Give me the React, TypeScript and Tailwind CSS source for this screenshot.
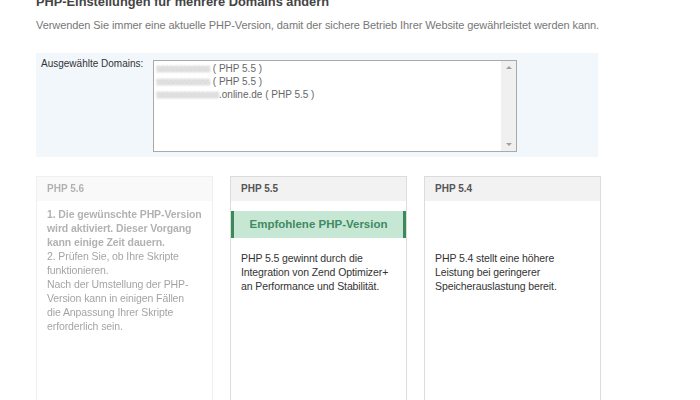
import React from 'react';

const Blur = ({ text }: { text: string }) => (
  <span className="text-[#aaa] blur-[0.8px] tracking-[-0.5px]">{text}</span>
);

function Card({
  title,
  faded,
  banner,
  spacer,
  children,
}: {
  title: string;
  faded?: boolean;
  banner?: boolean;
  spacer?: boolean;
  children: React.ReactNode;
}) {
  return (
    <div className={`w-[177px] h-[240px] border border-[#dcdcdc] bg-white ${faded ? 'opacity-45' : ''}`}>
      <div className="h-[24px] bg-[#f2f2f2] px-[10px] text-[10px] font-bold leading-[24px] text-[#555]">{title}</div>
      {banner && (
        <div className="mt-[10px] h-[27px] border-l-[3px] border-r-[3px] border-[#3b8a5c] bg-[#c6e7d4] text-center text-[11.5px] font-bold leading-[27px] text-[#418a62]">
          Empfohlene PHP-Version
        </div>
      )}
      {spacer && <div className="mt-[10px] h-[27px]" />}
      <div
        className={`pl-[10px] pr-[7px] text-[10.5px] leading-[14px] tracking-[-0.1px] text-[#333] ${faded ? 'pt-[6px]' : 'pt-[13px]'}`}
      >
        {children}
      </div>
    </div>
  );
}

export default function App() {
  return (
    <div className="w-[700px] h-[400px] overflow-hidden bg-white pl-[36px] font-['Liberation_Sans',Arial,sans-serif]">
      <h1 className="-mt-[6px] text-[12.8px] font-bold leading-[16px] text-[#444]">
        PHP-Einstellungen für mehrere Domains ändern
      </h1>
      <p className="mt-[8px] text-[11px] leading-[14px] tracking-[-0.08px] text-[#777]">
        Verwenden Sie immer eine aktuelle PHP-Version, damit der sichere Betrieb Ihrer Website gewährleistet werden kann.
      </p>

      <div className="mt-[21px] flex h-[104px] w-[562px] bg-[#f2f7fc] pl-[5px] pt-[4px]">
        <div className="w-[112px] text-[10px] leading-[13px] text-[#333]">Ausgewählte Domains:</div>
        <div className="mt-[3px] flex h-[92px] w-[364px] border border-[#a9a9a9] bg-white">
          <div className="flex-1 pl-[2px] pt-[1px] text-[10px] leading-[13px] text-[#666]">
            <div>
              <Blur text="ssssssssssss" /> ( PHP 5.5 )
            </div>
            <div>
              <Blur text="ssssssssssss" /> ( PHP 5.5 )
            </div>
            <div>
              <Blur text="ssssssssssssss" />.online.de ( PHP 5.5 )
            </div>
          </div>
          <div className="flex w-[15px] flex-col items-center justify-between bg-[#f0f0f0] py-[5px]">
            <div className="h-0 w-0 border-x-[3px] border-b-[3px] border-x-transparent border-b-[#a0a0a0]" />
            <div className="h-0 w-0 border-x-[3px] border-t-[3px] border-x-transparent border-t-[#a0a0a0]" />
          </div>
        </div>
      </div>

      <div className="mt-[19px] flex gap-[17px]">
        <Card title="PHP 5.6" faded>
          <b className="text-[#555]">1. Die gewünschte PHP-Version wird aktiviert. Dieser Vorgang kann einige Zeit dauern.</b>
          <br />
          2. Prüfen Sie, ob Ihre Skripte funktionieren.
          <br />
          Nach der Umstellung der PHP-Version kann in einigen Fällen
          <br />
          die Anpassung Ihrer Skripte erforderlich sein.
        </Card>
        <Card title="PHP 5.5" banner>
          PHP 5.5 gewinnt durch die Integration von Zend Optimizer+ an Performance und Stabilität.
        </Card>
        <Card title="PHP 5.4" spacer>
          PHP 5.4 stellt eine höhere Leistung bei geringerer Speicherauslastung bereit.
        </Card>
      </div>
    </div>
  );
}
